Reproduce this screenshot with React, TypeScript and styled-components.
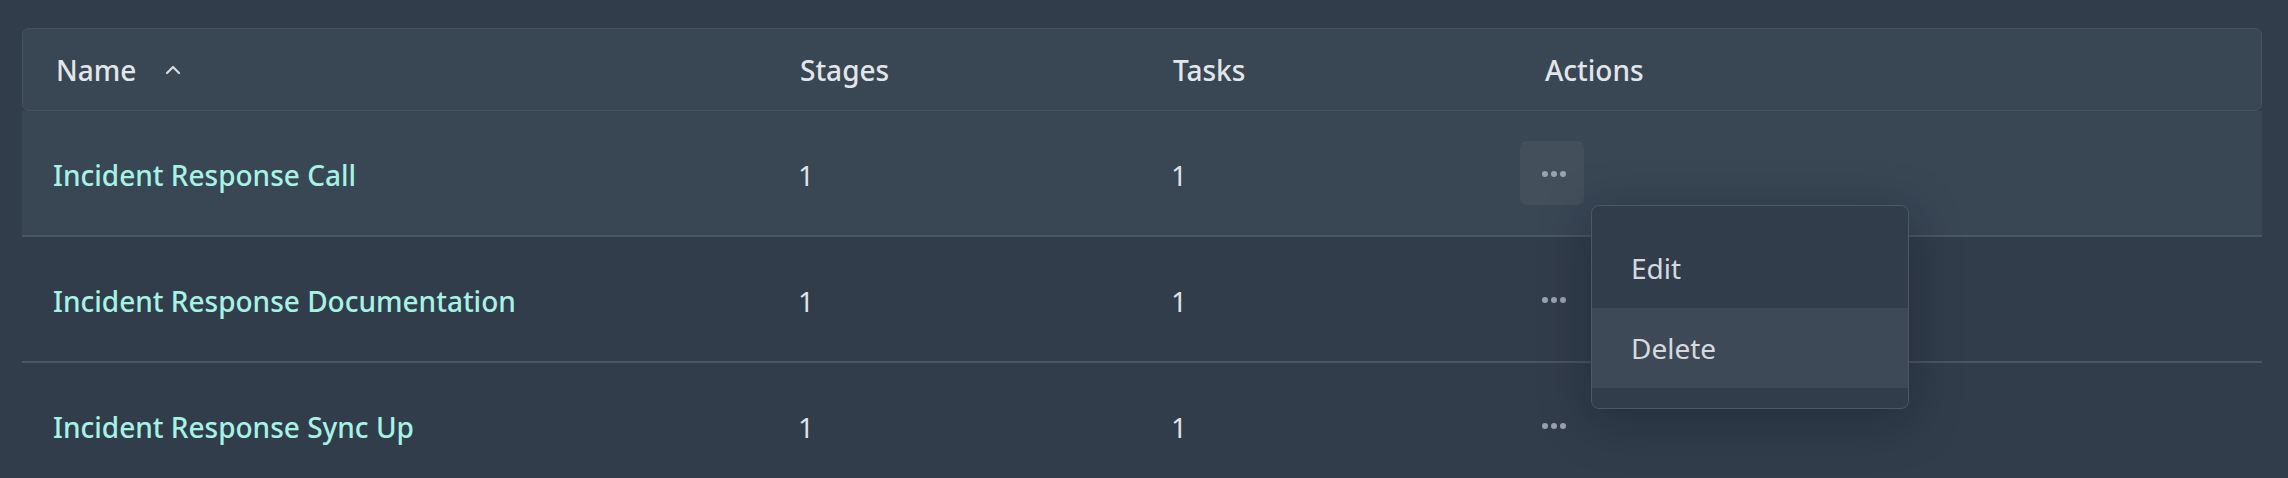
import React from "react"
import styled, { createGlobalStyle } from "styled-components"

const ROWS = [
  { name: "Incident Response Call", stages: 1, tasks: 1, active: true },
  { name: "Incident Response Documentation", stages: 1, tasks: 1 },
  { name: "Incident Response Sync Up", stages: 1, tasks: 1 },
]

const COLUMNS = "744px 373px 372px 1fr"

const GlobalStyle = createGlobalStyle`
  html, body {
    margin: 0;
    background: #323d4c;
  }
  body {
    font-family: "Noto Sans", "Open Sans", sans-serif;
    font-size: 28px;
    -webkit-font-smoothing: antialiased;
  }
`

const Page = styled.div`
  padding: 28px 26px 0 22px;
  height: 478px;
  box-sizing: border-box;
  overflow: hidden;
`

const Table = styled.div`
  display: flex;
  flex-direction: column;
`

const HeaderRow = styled.div`
  display: grid;
  grid-template-columns: ${ COLUMNS };
  align-items: center;
  height: 83px;
  box-sizing: border-box;
  background: #394654;
  border: 1px solid #48535f;
  border-radius: 7px;
`

const HeaderCell = styled.div`
  display: flex;
  align-items: center;
  padding-left: 33px;
  color: #e3e6e9;
  font-weight: 500;
`

const SortIcon = styled.svg`
  margin-left: 28px;
  width: 18px;
  height: 18px;
  color: #d8dce0;
`

const Row = styled.div<{ $active?: boolean }>`
  display: grid;
  grid-template-columns: ${ COLUMNS };
  align-items: center;
  height: 126px;
  box-sizing: border-box;
  border-bottom: 2px solid #4b5663;
  background: ${ ({ $active }) => $active ? "#394654" : "transparent" };
`

const Cell = styled.div<{ $pad?: number }>`
  display: flex;
  align-items: center;
  padding-left: ${ ({ $pad }) => $pad ?? 32 }px;
  padding-top: 3px;
  color: #dfe3e7;
  font-weight: 400;
`

const NameLink = styled.a`
  color: #a6f3e4;
  font-weight: 500;
  text-decoration: none;
  cursor: pointer;
`

const ActionsWrap = styled.div`
  position: relative;
  margin-top: -3px;
`

const MenuButton = styled.button<{ $open?: boolean }>`
  display: flex;
  align-items: center;
  justify-content: center;
  gap: 3px;
  width: 64px;
  height: 64px;
  padding: 2px 0 0 4px;
  border: none;
  border-radius: 7px;
  background: ${ ({ $open }) => $open ? "#444f5c" : "transparent" };
  cursor: pointer;
`

const Dot = styled.span`
  width: 6px;
  height: 6px;
  border-radius: 50%;
  background: #9aa3ad;
`

const Menu = styled.div`
  position: absolute;
  top: 100%;
  left: calc(100% + 7px);
  width: 318px;
  box-sizing: border-box;
  padding: 22px 0 20px;
  background: #323d4c;
  border: 1px solid #4d5866;
  border-radius: 8px;
  box-shadow: 0 10px 50px rgba(10, 16, 24, 0.35);
  z-index: 10;
`

const MenuItem = styled.div<{ $hover?: boolean }>`
  display: flex;
  align-items: center;
  height: 80px;
  padding: 0 39px;
  color: #d6dade;
  background: ${ ({ $hover }) => $hover ? "#3e4957" : "transparent" };
  cursor: pointer;
`

const Dots = () => (
  <>
    <Dot />
    <Dot />
    <Dot />
  </>
)

export default function App() {
  return (
    <Page>
      <GlobalStyle />
      <Table>
        <HeaderRow>
          <HeaderCell>
            Name
            <SortIcon viewBox="0 0 18 18" fill="none" stroke="currentColor" strokeWidth={ 2.2 } strokeLinecap="round" strokeLinejoin="round">
              <path d="M3 12l6-6 6 6" />
            </SortIcon>
          </HeaderCell>
          <HeaderCell>Stages</HeaderCell>
          <HeaderCell>Tasks</HeaderCell>
          <HeaderCell>Actions</HeaderCell>
        </HeaderRow>

        { ROWS.map( ( row, idx ) => (
          <Row key={ "row-" + idx } $active={ row.active }>
            <Cell $pad={ 31 }>
              <NameLink>{ row.name }</NameLink>
            </Cell>
            <Cell>{ row.stages }</Cell>
            <Cell>{ row.tasks }</Cell>
            <Cell $pad={ 9 }>
              <ActionsWrap>
                <MenuButton $open={ row.active }>
                  <Dots />
                </MenuButton>
                { row.active && (
                  <Menu>
                    <MenuItem>Edit</MenuItem>
                    <MenuItem $hover>Delete</MenuItem>
                  </Menu>
                ) }
              </ActionsWrap>
            </Cell>
          </Row>
        ) ) }
      </Table>
    </Page>
  )
}
